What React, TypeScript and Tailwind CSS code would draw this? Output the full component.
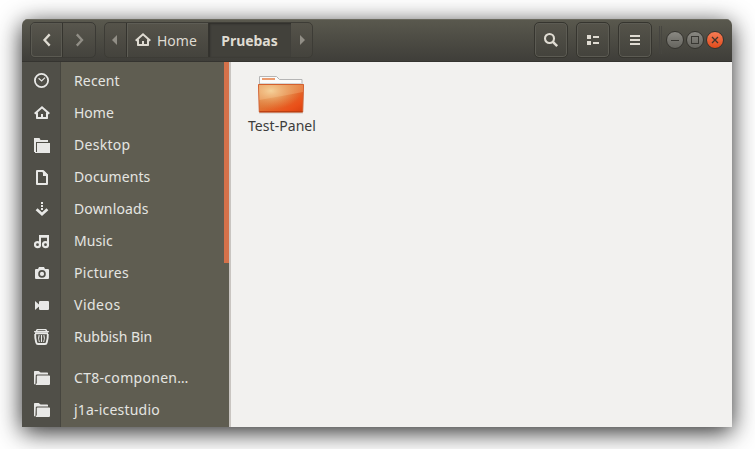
import type { ReactNode } from "react";

type Place = { name: string; icon: ReactNode; tracking: string };

const Svg = ({ children, className = "" }: { children: ReactNode; className?: string }) => (
  <svg width={16} height={16} viewBox="0 0 16 16" fill="currentColor" className={`block shrink-0 ${className}`}>
    {children}
  </svg>
);

const HomeIcon = () => (
  <Svg>
    <path d="M.7 8.7 8 2.3l7.3 6.4" fill="none" stroke="currentColor" strokeWidth="2" />
    <path d="M2 8l2-1v5h3V9h2v3h3V7l2 1v5.4l-.6.6H2.6L2 13.4Z" />
  </Svg>
);

const FolderIcon = () => (
  <Svg>
    <path d="M0 1.6.6 1H4.6L6.6 2.4h6.8L14 3v1.400H2.600L1.800 5.200 1.400 14.500H.8L0 13.800Z" />
    <path d="M3.600 5.400h11.800l.6.6v8.300l-.8.7H2.200L1.800 14.600 2.800 13V6Z" />
  </Svg>
);

const places: Place[] = [
  {
    name: "Recent",
    tracking: "tracking-[0.15px]",
    icon: (
      <Svg>
        <circle cx="7.5" cy="7.5" r="6.6" fill="none" stroke="currentColor" strokeWidth="1.8" />
        <path d="m4.6 5.2 3 2.7 3.4-3.3" fill="none" stroke="currentColor" strokeWidth="1.2" />
      </Svg>
    ),
  },
  { name: "Home", tracking: "tracking-[0px]", icon: <HomeIcon /> },
  {
    name: "Desktop",
    tracking: "tracking-[0.3px]",
    icon: (
      <Svg>
        <path d="M0 1h5.5l1 2H14v2H2v10H0Z" />
        <path d="M3 6h13v10H1v-1h2Z" />
      </Svg>
    ),
  },
  {
    name: "Documents",
    tracking: "tracking-[0.1px]",
    icon: (
      <Svg>
        <path d="M3 2h6l4 4v9H3Z" fill="none" stroke="currentColor" strokeWidth="2" strokeLinejoin="round" />
        <path d="M8 2h2l4 4v1H9V4Z" />
      </Svg>
    ),
  },
  {
    name: "Downloads",
    tracking: "tracking-[0.15px]",
    icon: (
      <Svg>
        <path d="M7 1h2v2H7zM7 4h2v2H7zM7 7h2v2H7z" />
        <path d="M2.600 8.300 8 13.200l5.400-4.900" fill="none" stroke="currentColor" strokeWidth="2.800" />
      </Svg>
    ),
  },
  {
    name: "Music",
    tracking: "tracking-[0.1px]",
    icon: (
      <Svg>
        <path d="M6 12V3h8v9" fill="none" stroke="currentColor" strokeWidth="2" />
        <path d="M6 3.500h8v1.200H6z" />
        <circle cx="3.500" cy="11.700" r="2.500" fill="none" stroke="currentColor" strokeWidth="2.200" />
        <circle cx="11.500" cy="11.700" r="2.500" fill="none" stroke="currentColor" strokeWidth="2.200" />
      </Svg>
    ),
  },
  {
    name: "Pictures",
    tracking: "tracking-[0.3px]",
    icon: (
      <Svg>
        <path
          fillRule="evenodd"
          d="M5 2h5l1 2h3.3l.7.7v8.6l-.7.7H1.7l-.7-.7V4.7L1.7 4H4ZM8 5.1a3.8 3.8 0 1 0 0 7.6 3.8 3.8 0 0 0 0-7.6Z"
        />
        <circle cx="8" cy="8.9" r="2.1" />
      </Svg>
    ),
  },
  {
    name: "Videos",
    tracking: "tracking-[0.5px]",
    icon: (
      <Svg>
        <path d="M5.8 4h8.5l.7.7v7.6l-.7.7H5.8l-.8-.7V4.7ZM1 4l4 3.500v2L1 13Z" />
      </Svg>
    ),
  },
  {
    name: "Rubbish Bin",
    tracking: "tracking-[-0.03px]",
    icon: (
      <Svg>
        <path d="M2 1.500V1L3 0h9l1 1v.7l2 .6V3.300H0V2.300l2-.6ZM3.500 1.300v.7h8v-.7Z" fillRule="evenodd" />
        <path
          d="M1 4.300h13M1.200 5Q1 9 2.200 13.200q.4 1.800 1.800 1.800h7q1.400 0 1.800-1.800Q14 9 13.800 5"
          fill="none"
          stroke="currentColor"
          strokeWidth="1.900"
        />
        <path d="M5.200 6Q3.800 9.500 5.400 13M7.500 6v7M9.800 6q1.400 3.500-.2 7" fill="none" stroke="currentColor" strokeWidth="1.100" />
      </Svg>
    ),
  },
];

const bookmarks: Place[] = [
  { name: "CT8-componen…", tracking: "tracking-[0.3px]", icon: <FolderIcon /> },
  { name: "j1a-icestudio", tracking: "tracking-[0.2px]", icon: <FolderIcon /> },
];

const Row = ({ place }: { place: Place }) => (
  <li className="flex h-8 items-center">
    <span className="flex w-[39px] shrink-0 items-center pl-3 text-[#e8e8e6]">{place.icon}</span>
    <span className={`pb-[2px] pl-[13px] whitespace-nowrap text-[#e5e5e1] ${place.tracking}`}>{place.name}</span>
  </li>
);

const ToolButton = ({ children }: { children: ReactNode }) => (
  <button className="flex h-9 w-[34px] items-center justify-center rounded-[5px] border border-[#36352f] bg-linear-to-b from-[#55534a] to-[#43423c] text-[#dfdbd2] shadow-[inset_0_0_0_1px_#5c5b53]">
    {children}
  </button>
);

const CIRCLE =
  "flex size-[18px] items-center justify-center rounded-full border border-[#35342f] bg-linear-to-b";

export default function App() {
  return (
    <div className="h-[449px] w-[755px] overflow-hidden bg-white pt-[19px] pl-[22px] font-['Noto_Sans','Open_Sans',sans-serif] text-[14px]">
      <div className="flex h-[408px] w-[710px] flex-col overflow-hidden rounded-t-[6px] shadow-[0_5px_24px_rgba(0,0,0,0.85)]">
        <header className="flex h-[43px] shrink-0 items-start border-b border-[#353430] bg-linear-to-b from-[#5a594e] to-[#3f3e39] pt-[3px] pl-2 shadow-[inset_0_1px_0_#6a695f]">
          <div className="flex h-9 w-[66px] rounded-[5px] border border-[#3b3a35] bg-linear-to-b from-[#58564d] to-[#44433d]">
            <div className="flex w-8 items-center justify-center rounded-l-[4px] border-r border-[#36352f] text-[#dfdbd2] shadow-[inset_0_0_0_1px_#5b5a52]">
              <Svg>
                <path d="M10.700 2.400 5.500 8l5.200 5.600" fill="none" stroke="currentColor" strokeWidth="2.300" />
              </Svg>
            </div>
            <div className="flex flex-1 items-center justify-center text-[#918e86]">
              <Svg>
                <path d="M5.800 2.400 11 8l-5.200 5.600" fill="none" stroke="currentColor" strokeWidth="2.300" />
              </Svg>
            </div>
          </div>

          <nav className="ml-2 flex h-9 w-[209px] rounded-[5px] border border-[#3d3c36] bg-linear-to-b from-[#55534a] to-[#44433d]">
            <div className="flex w-[22px] items-center border-r border-[#34332e] pl-[7px] text-[#918e86]">
              <svg width="6" height="10" fill="currentColor">
                <path d="M5 0v10L0 5Z" />
              </svg>
            </div>
            <div className="flex w-[82px] items-center border-r border-[#34332e] pl-2 text-[#dfdbd2] shadow-[inset_1px_1px_0_#5e5d55]">
              <HomeIcon />
              <span className="pl-[6px]">Home</span>
            </div>
            <div className="flex w-[82px] items-center justify-center bg-[#42413b] pr-px font-bold tracking-[-0.05px] text-[#dfdbd2] shadow-[inset_1px_1px_2px_#2f2e2a]">
              Pruebas
            </div>
            <div className="flex flex-1 items-center pl-[9px] text-[#918e86]">
              <svg width="6" height="10" fill="currentColor">
                <path d="M0 0v10l5-5Z" />
              </svg>
            </div>
          </nav>

          <div className="ml-auto flex gap-2">
            <ToolButton>
              <Svg>
                <circle cx="6.500" cy="6.500" r="4.500" fill="none" stroke="currentColor" strokeWidth="2.100" />
                <path d="m9.600 9.600 4.600 4.600" stroke="currentColor" strokeWidth="2.400" />
              </Svg>
            </ToolButton>
            <ToolButton>
              <Svg>
                <path d="M2 3h4v4H2zM2 9h4v4H2zM8 4h6v2H8zM8 10h6v2H8z" />
              </Svg>
            </ToolButton>
            <ToolButton>
              <Svg>
                <path d="M3 3h10v2H3zM3 7h10v2H3zM3 11h10v2H3z" />
              </Svg>
            </ToolButton>
          </div>
          <div className="mt-1 ml-[7px] h-7 w-[3px] border-x border-l-[#454440] border-r-[#474640]" />
          <div className="mt-[9px] mr-2 ml-1 flex gap-[2px]">
            <div className={`${CIRCLE} from-[#8a8983] to-[#65645e]`}>
              <span className="h-px w-2 bg-[#393833]" />
            </div>
            <div className={`${CIRCLE} from-[#8a8983] to-[#65645e]`}>
              <span className="size-2 border border-[#393833]" />
            </div>
            <div className={`${CIRCLE} from-[#f67b54] to-[#e14b18]`}>
              <svg width="8" height="8" stroke="#40352c" strokeWidth="1.300">
                <path d="m1 1 6 6M7 1 1 7" />
              </svg>
            </div>
          </div>
        </header>

        <div className="flex min-h-0 flex-1">
          <aside className="flex w-[209px] shrink-0 border-r-2 border-[#c9c5c1] bg-[linear-gradient(to_right,#504f48_38px,#46453e_38px,#46453e_39px,#5f5d51_39px)]">
            <div className="w-[202px] shrink-0">
              <ul className="pt-[3px]">
                {places.map((p) => (
                  <Row key={p.name} place={p} />
                ))}
              </ul>
              <ul className="pt-[9px]">
                {bookmarks.map((p) => (
                  <Row key={p.name} place={p} />
                ))}
              </ul>
            </div>
            <div className="h-[201px] w-[5px] bg-[#d4714a]" />
          </aside>

          <main className="flex-1 bg-[#f2f1ef]">
            <figure className="mt-[13px] ml-[17px] flex w-[68px] flex-col items-center text-[#3c3c3c]">
              <svg width="48" height="40" viewBox="0 0 48 40" className="mr-[2px] block">
                <defs>
                  <linearGradient id="front" x1="0" y1="0" x2="1" y2="1">
                    <stop offset="0" stopColor="#e08a4c" />
                    <stop offset=".45" stopColor="#e07434" />
                    <stop offset=".8" stopColor="#ea5019" />
                    <stop offset="1" stopColor="#d8400f" />
                  </linearGradient>
                  <radialGradient id="glow" cx=".27" cy=".22" r=".7">
                    <stop offset="0" stopColor="#f2cf96" />
                    <stop offset="1" stopColor="#e89a58" stopOpacity="0" />
                  </radialGradient>
                </defs>
                <path d="M2.500 10V1.500h17l3 3h22.500V10" fill="#fafafa" stroke="#b5b5b5" />
                <path d="M5 3h13v2H5z" fill="#eb9c70" />
                <path d="M3 8h42v1.500H3z" fill="#d6d6d6" />
                <path d="M1.500 9h45.500l-1 29.500H2Z" fill="#cfcac6" />
                <path d="M1.500 9.500h45l-.8 27.500H2.300Z" fill="url(#front)" stroke="#d4602f" />
                <path d="M2 10h44l-.7 26.500H2.700Z" fill="url(#glow)" />
                <path d="M2 10h44v7Q26 21 2.400 25Z" fill="#ffd9a8" fillOpacity=".24" />
                <path d="M2.500 36.700h43" stroke="#b7390e" />
              </svg>
              <figcaption className="mt-px leading-5 tracking-[0.05px] whitespace-nowrap">Test-Panel</figcaption>
            </figure>
          </main>
        </div>
      </div>
    </div>
  );
}
